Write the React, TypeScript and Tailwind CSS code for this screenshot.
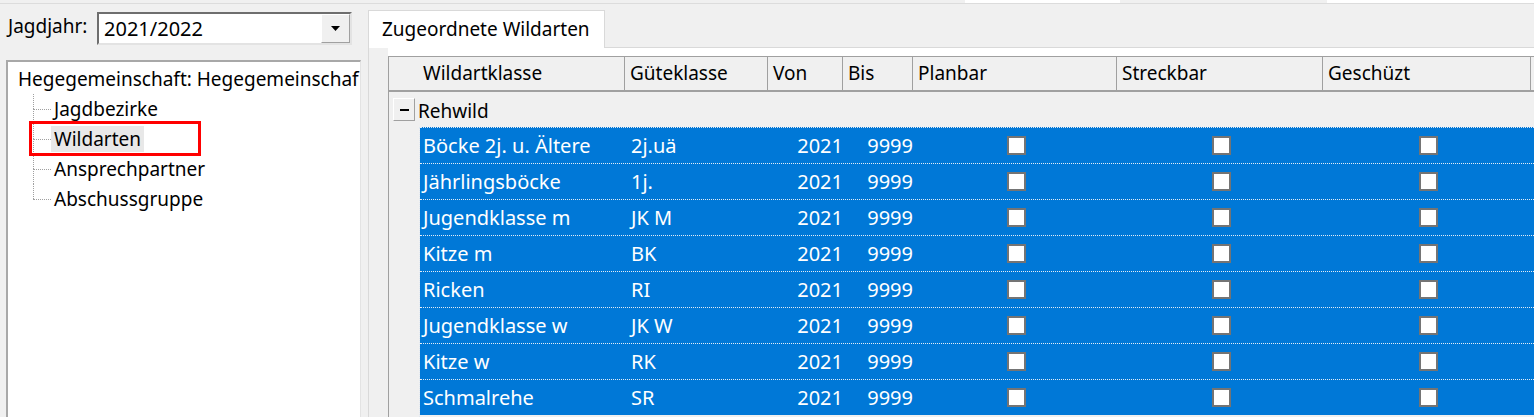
import React from 'react';

interface Row {
  klasse: string;
  guete: string;
  von: string;
  bis: string;
}

const rows: Row[] = [
  { klasse: 'Böcke 2j. u. Ältere', guete: '2j.uä', von: '2021', bis: '9999' },
  { klasse: 'Jährlingsböcke', guete: '1j.', von: '2021', bis: '9999' },
  { klasse: 'Jugendklasse m', guete: 'JK M', von: '2021', bis: '9999' },
  { klasse: 'Kitze m', guete: 'BK', von: '2021', bis: '9999' },
  { klasse: 'Ricken', guete: 'RI', von: '2021', bis: '9999' },
  { klasse: 'Jugendklasse w', guete: 'JK W', von: '2021', bis: '9999' },
  { klasse: 'Kitze w', guete: 'RK', von: '2021', bis: '9999' },
  { klasse: 'Schmalrehe', guete: 'SR', von: '2021', bis: '9999' }
];

const treeChildren = ['Jagdbezirke', 'Wildarten', 'Ansprechpartner', 'Abschussgruppe'];

function Checkbox() {
  return <div className="w-[19px] h-[19px] bg-white border-2 border-[#747474]" />;
}

export default function App() {
  return (
    <div className="w-[1534px] h-[417px] overflow-hidden bg-[#f0f0f0] flex flex-col font-['Noto_Sans',sans-serif] text-[19px] text-black">
      {/* window top edge */}
      <div className="h-[4px] flex border-b border-[#dcdcdc]">
        <div className="w-[965px]" />
        <div className="w-[155px] bg-white" />
        <div className="w-[207px]" />
        <div className="flex-1 bg-white" />
      </div>

      <div className="flex-1 flex">
        {/* Left side */}
        <div className="w-[368px] flex flex-col">
          <div className="h-[56px] flex items-start pt-[8px] pl-[8px]">
            <div className="w-[89px] mt-[2px] leading-[24px] whitespace-nowrap">Jagdjahr:</div>
            <div className="w-[255px] h-[33px] flex bg-white border-2 border-t-[#6e6e6e] border-l-[#6e6e6e] border-r-[#e3e3e3] border-b-[#e3e3e3]">
              <div className="flex-1 flex items-center pl-[5px] text-[20px]">2021/2022</div>
              <div className="w-[29px] flex items-center justify-center bg-[#f0f0f0] border border-t-white border-l-white border-r-[#a0a0a0] border-b-[#a0a0a0]">
                <svg width="9" height="5" viewBox="0 0 9 5">
                  <path d="M0 0h9L4.5 5z" fill="#000" />
                </svg>
              </div>
            </div>
          </div>

          {/* Tree */}
          <div className="ml-[6px] w-[355px] flex-1 bg-white border-l-2 border-t-2 border-[#a8a8a8] border-r border-r-[#e3e3e3] relative pt-[2px] whitespace-nowrap overflow-hidden">
            <div className="h-[30px] flex items-center pl-[10px]">Hegegemeinschaft: Hegegemeinschaf</div>
            {treeChildren.map((label, i) => {
              const last = i === treeChildren.length - 1;
              return (
                <div key={label} className="h-[30px] flex items-center">
                  <div className="w-[25px]" />
                  <div className="w-[18px] h-full flex flex-col">
                    <div className="h-1/2 border-l border-dotted border-[#a0a0a0]" />
                    <div className={`h-1/2 border-t border-dotted border-[#a0a0a0] ${last ? '' : 'border-l'}`} />
                  </div>
                  <div className={`h-[26px] flex items-center px-[3px] ${label === 'Wildarten' ? 'bg-[#e8e8e8]' : ''}`}>{label}</div>
                </div>
              );
            })}
            {/* red annotation */}
            <div className="absolute left-[21px] top-[59px] w-[172px] h-[35px] border-[3px] border-[#ff0000]" />
          </div>
        </div>

        {/* Right side */}
        <div className="flex-1 flex flex-col">
          <div className="h-[44px] flex items-end">
            <div className="w-[237px] h-[38px] bg-white border border-b-0 border-[#d9d9d9] flex items-center pl-[13px] whitespace-nowrap">
              Zugeordnete Wildarten
            </div>
            <div className="flex-1 border-b border-[#d9d9d9]" />
          </div>

          <div className="flex-1 flex border-l border-[#d9d9d9]">
            <div className="w-[19px]" />
            <div className="flex-1 flex flex-col">
              <div className="h-[8px] bg-white" />
              <div className="flex-1 flex flex-col border-l border-[#a0a0a0] overflow-hidden">
                {/* header */}
                <div className="h-[36px] flex bg-[#f0f0f0] border-t border-b-2 border-[#a0a0a0] whitespace-nowrap">
                  <div className="w-[236px] flex items-center pl-[34px] border-r border-[#a0a0a0]">Wildartklasse</div>
                  <div className="w-[143px] flex items-center pl-[5px] border-r border-[#a0a0a0]">Güteklasse</div>
                  <div className="w-[75px] flex items-center pl-[5px] border-r border-[#a0a0a0]">Von</div>
                  <div className="w-[70px] flex items-center pl-[5px] border-r border-[#a0a0a0]">Bis</div>
                  <div className="w-[204px] flex items-center pl-[5px] border-r border-[#a0a0a0]">Planbar</div>
                  <div className="w-[206px] flex items-center pl-[5px] border-r border-[#a0a0a0]">Streckbar</div>
                  <div className="w-[208px] flex items-center pl-[5px] border-r border-[#a0a0a0]">Geschüzt</div>
                  <div className="flex-1" />
                </div>

                {/* group row */}
                <div className="h-[35px] flex items-center pl-[4px]">
                  <div className="w-[22px] h-[23px] flex items-center justify-center bg-[#f0f0f0] border border-t-white border-l-white border-r-[#a0a0a0] border-b-[#a0a0a0]">
                    <div className="w-[9px] h-[2px] bg-black" />
                  </div>
                  <div className="ml-[3px] pt-[3px]">Rehwild</div>
                </div>

                {/* data rows */}
                <div className="flex-1 flex">
                  <div className="w-[30px]" />
                  <div className="flex-1 flex flex-col border-l border-dotted border-[#dfe8f2]">
                    {rows.map((r) => (
                      <div key={r.klasse} className="h-[36px] shrink-0 flex items-center bg-[#0078d7] text-white text-[20px] border-t border-dotted border-[#e4ecf5] whitespace-nowrap">
                        <div className="w-[206px] pl-[3px]">{r.klasse}</div>
                        <div className="w-[143px] pl-[5px]">{r.guete}</div>
                        <div className="w-[75px] text-right pr-[1px]">{r.von}</div>
                        <div className="w-[70px] text-right pr-[1px]">{r.bis}</div>
                        <div className="w-[204px] flex justify-center"><Checkbox /></div>
                        <div className="w-[206px] flex justify-center"><Checkbox /></div>
                        <div className="w-[208px] flex justify-center"><Checkbox /></div>
                        <div className="flex-1" />
                      </div>
                    ))}
                  </div>
                </div>
              </div>
            </div>
          </div>
        </div>
      </div>
    </div>
  );
}
